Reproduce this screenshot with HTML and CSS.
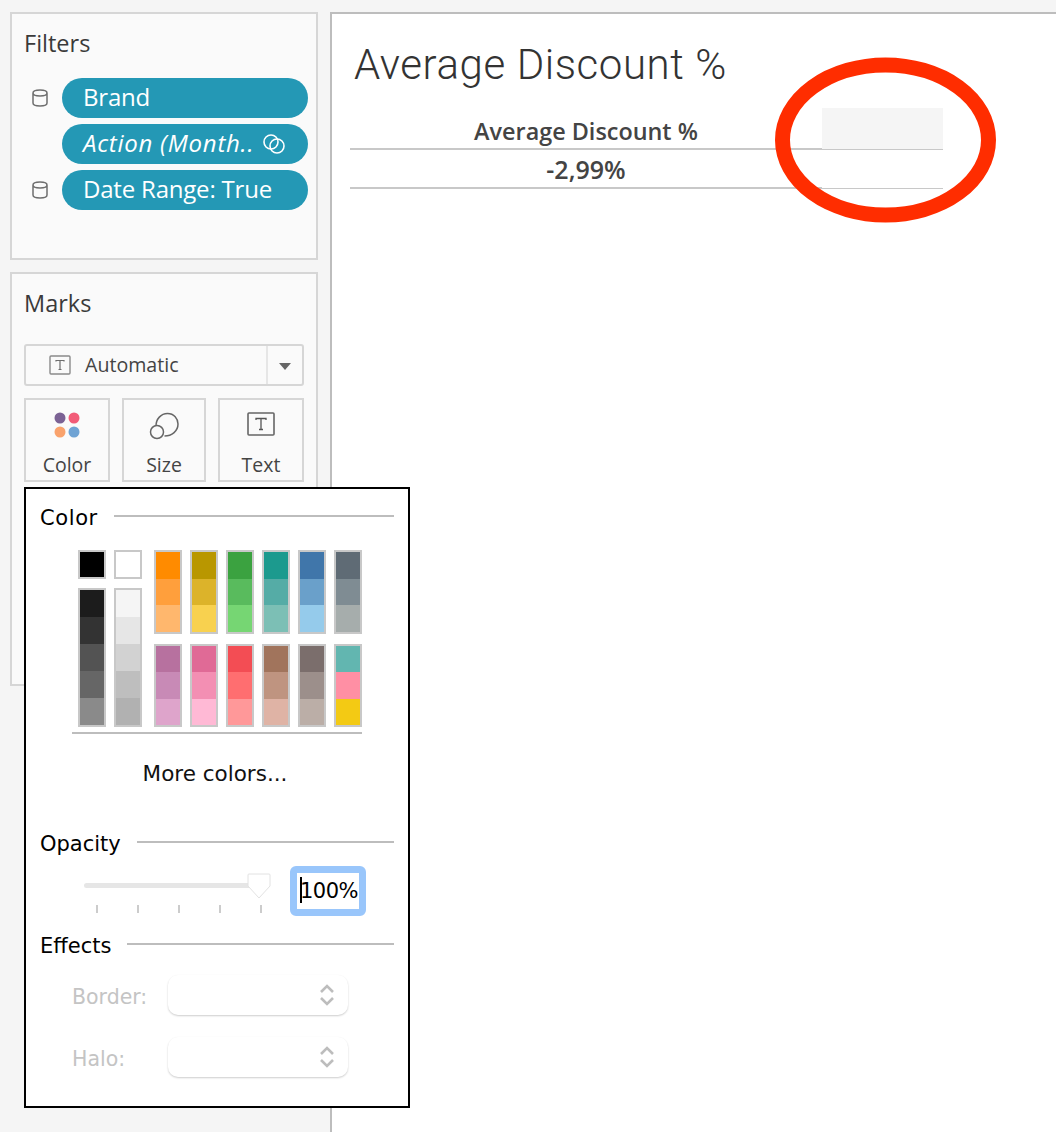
FILE: index.html
```html
<!DOCTYPE html>
<html lang="en">
<head>
<meta charset="utf-8">
<title>Average Discount %</title>
<link rel="stylesheet" href="styles.css">
</head>
<body>
<div class="app">
  <aside class="side">
    <section class="panel filters">
      <h2 class="panel-title">Filters</h2>
      <ul class="pills">
        <li class="pill-row">
          <svg class="cyl" viewBox="0 0 16 18" width="16" height="18"><path d="M1 4v10c0 2 3 3 7 3s7-1 7-3V4c0-2-3-3-7-3S1 2 1 4c0 2 3 3 7 3s7-1 7-3" fill="none" stroke="#6e6e6e" stroke-width="1.5"/></svg>
          <span class="pill">Brand</span>
        </li>
        <li class="pill-row">
          <span class="cyl-gap"></span>
          <span class="pill pill-action"><em>Action (Month..</em>
            <svg class="link" viewBox="0 0 24 22" width="24" height="22"><circle cx="9" cy="9" r="7" fill="none" stroke="#fff" stroke-width="1.6"/><circle cx="15" cy="13" r="7" fill="none" stroke="#fff" stroke-width="1.6"/></svg>
          </span>
        </li>
        <li class="pill-row">
          <svg class="cyl" viewBox="0 0 16 18" width="16" height="18"><path d="M1 4v10c0 2 3 3 7 3s7-1 7-3V4c0-2-3-3-7-3S1 2 1 4c0 2 3 3 7 3s7-1 7-3" fill="none" stroke="#6e6e6e" stroke-width="1.5"/></svg>
          <span class="pill">Date Range: True</span>
        </li>
      </ul>
    </section>

    <section class="panel marks">
      <h2 class="panel-title">Marks</h2>
      <div class="mark-select">
        <span class="mark-select-main">
          <svg viewBox="0 0 22 20" width="22" height="20"><rect x="1" y="1" width="20" height="18" rx="1" fill="none" stroke="#8a8a8a" stroke-width="1.4"/><path d="M7 6.500V5.500h8v1M11 5.500v9M9.500 14.500h3" fill="none" stroke="#6e6e6e" stroke-width="1.2"/></svg>
          <span class="mark-select-label">Automatic</span>
        </span>
        <span class="mark-select-arrow"></span>
      </div>
      <div class="mark-btns">
        <div class="mark-btn btn-color">
          <svg viewBox="0 0 26 26" width="26" height="26"><circle cx="6" cy="6" r="5.500" fill="#7b6294"/><circle cx="20" cy="6" r="5.500" fill="#f25c78"/><circle cx="6" cy="20" r="5.500" fill="#f9a26c"/><circle cx="20" cy="20" r="5.500" fill="#6fa3d4"/></svg>
          <span>Color</span>
        </div>
        <div class="mark-btn btn-size">
          <svg viewBox="0 0 30 28" width="30" height="28"><path d="M7 14C7 7 12 1.500 18.500 1.500S29 6.500 29 12c0 7-6 12-13.500 12" fill="none" stroke="#666" stroke-width="1.5"/><circle cx="8" cy="20" r="6.500" fill="none" stroke="#666" stroke-width="1.500"/></svg>
          <span>Size</span>
        </div>
        <div class="mark-btn btn-text">
          <svg viewBox="0 0 28 24" width="28" height="24"><rect x="1" y="1" width="26" height="22" rx="1" fill="none" stroke="#666" stroke-width="1.600"/><path d="M9 8V6.500h10V8M14 6.500v11M12 17.500h4" fill="none" stroke="#555" stroke-width="1.300"/></svg>
          <span>Text</span>
        </div>
      </div>
    </section>
  </aside>

  <main class="canvas">
    <h1 class="sheet-title">Average Discount %</h1>
    <div class="table">
      <div class="th">Average Discount %</div>
      <div class="th th-blank"></div>
      <div class="td">-2,99%</div>
      <div class="td td-blank"></div>
    </div>
  </main>
</div>

<svg class="annotation" viewBox="0 0 222 166" width="222" height="166"><ellipse cx="110.500" cy="83" rx="103" ry="75" fill="none" stroke="#ff2d00" stroke-width="15"/></svg>

<div class="popup">
  <div class="pop-head head-color"><span>Color</span><i></i></div>
  <div class="palette">
    <div class="mono">
      <div class="swatch chip"><b style="background:#000"></b></div>
      <div class="swatch chip"><b style="background:#fff"></b></div>
      <div class="swatch tall"><b style="background:#1c1c1c"></b><b style="background:#333"></b><b style="background:#535353"></b><b style="background:#666"></b><b style="background:#8a8a8a"></b></div>
      <div class="swatch tall"><b style="background:#f5f5f5"></b><b style="background:#e6e6e6"></b><b style="background:#d2d2d2"></b><b style="background:#bebebe"></b><b style="background:#b1b1b1"></b></div>
    </div>
    <div class="hues">
      <div class="swatch"><b style="background:#ff8b00"></b><b style="background:#ff9f3c"></b><b style="background:#ffb76d"></b></div>
      <div class="swatch"><b style="background:#b99700"></b><b style="background:#dcb32a"></b><b style="background:#f8d14f"></b></div>
      <div class="swatch"><b style="background:#3ba240"></b><b style="background:#59bb5d"></b><b style="background:#76d673"></b></div>
      <div class="swatch"><b style="background:#1c9a8e"></b><b style="background:#55aca6"></b><b style="background:#7cbfb5"></b></div>
      <div class="swatch"><b style="background:#4076aa"></b><b style="background:#6aa0ca"></b><b style="background:#95cbeb"></b></div>
      <div class="swatch"><b style="background:#5f6b75"></b><b style="background:#7f8c93"></b><b style="background:#a6adac"></b></div>
      <div class="swatch"><b style="background:#b7719f"></b><b style="background:#c88ab6"></b><b style="background:#dea4cb"></b></div>
      <div class="swatch"><b style="background:#e06a96"></b><b style="background:#f38fb3"></b><b style="background:#ffb9d5"></b></div>
      <div class="swatch"><b style="background:#f34d54"></b><b style="background:#ff6e70"></b><b style="background:#ff9899"></b></div>
      <div class="swatch"><b style="background:#a1745c"></b><b style="background:#bf9480"></b><b style="background:#dfb3a5"></b></div>
      <div class="swatch"><b style="background:#7b6e6c"></b><b style="background:#9c8f8b"></b><b style="background:#bbaea7"></b></div>
      <div class="swatch"><b style="background:#62b6b0"></b><b style="background:#ff8fa4"></b><b style="background:#f3ca14"></b></div>
    </div>
  </div>
  <div class="more">More colors...</div>

  <div class="pop-head head-opacity"><span>Opacity</span><i></i></div>
  <div class="opacity-row">
    <div class="slider">
      <div class="track"></div>
      <svg class="thumb" viewBox="0 0 24 26" width="24" height="26"><path d="M2 1h20a1 1 0 0 1 1 1v11L12 25 1 13V2a1 1 0 0 1 1-1z" fill="#fff" stroke="#e2e2e2"/></svg>
      <div class="ticks"><i></i><i></i><i></i><i></i><i></i></div>
    </div>
    <div class="pct"><span class="caret"></span>100%</div>
  </div>

  <div class="pop-head head-effects"><span>Effects</span><i></i></div>
  <div class="effect">
    <span class="effect-label">Border:</span>
    <div class="stepper"><svg viewBox="0 0 16 24" width="16" height="24"><path d="M2 9l6-6 6 6M2 15l6 6 6-6" fill="none" stroke="#bdbdbd" stroke-width="2.600"/></svg></div>
  </div>
  <div class="effect">
    <span class="effect-label">Halo:</span>
    <div class="stepper"><svg viewBox="0 0 16 24" width="16" height="24"><path d="M2 9l6-6 6 6M2 15l6 6 6-6" fill="none" stroke="#bdbdbd" stroke-width="2.600"/></svg></div>
  </div>
</div>
</body>
</html>
```

FILE: styles.css
```css
* { box-sizing: border-box; }
html, body { margin: 0; height: 100%; overflow: hidden; }
body { background: #f5f5f5; font-family: "Open Sans", "Noto Sans", sans-serif; color: #333; position: relative; }
.app { display: flex; height: 1132px; }

.side { width: 330px; flex: none; padding: 12px 12px 0 10px; display: flex; flex-direction: column; gap: 12px; }
.panel { background: #fafafa; border: 2px solid #d6d6d6; padding: 14px 8px 0 12px; }
.filters { height: 248px; }
.marks { height: 414px; }
.panel-title { margin: 0; font-size: 23.500px; font-weight: 400; line-height: 30px; color: #3a3a3a; }

.pills { list-style: none; margin: 20px 0 0; padding: 0; display: flex; flex-direction: column; gap: 6px; }
.pill-row { display: flex; align-items: center; gap: 14px; padding-left: 8px; }
.cyl { flex: none; }
.cyl-gap { width: 16px; flex: none; }
.pill { flex: 1; height: 40px; border-radius: 20px; background: #2498b5; color: #fff; font-size: 24px; line-height: 38px; padding-left: 21px; white-space: nowrap; letter-spacing: -.2px; }
.pill-action { display: flex; align-items: center; padding-bottom: 2px; }
.pill-action em { font-style: italic; letter-spacing: .75px; }
.link { margin: 2px 0 0 8px; }

.mark-select { margin-top: 26px; width: 280px; height: 42px; border: 2px solid #d6d6d6; border-radius: 3px; display: flex; }
.mark-select-main { flex: 1; display: flex; align-items: center; gap: 13px; padding-left: 23px; font-size: 19.600px; color: #444; border-right: 2px solid #e6e6e6; }
.mark-select-label { margin: -2px 0 0 1px; }
.mark-select-arrow { width: 34px; position: relative; }
.mark-select-arrow::after { content: ""; position: absolute; left: 11px; top: 17px; border: 6.500px solid transparent; border-top: 7px solid #666; border-bottom: 0; }
.mark-btns { display: flex; gap: 12px; margin-top: 12px; width: 280px; }
.mark-btn { height: 84px; border: 2px solid #d6d6d6; display: flex; flex-direction: column; align-items: center; font-size: 19.500px; color: #444; padding-top: 12px; }
.mark-btn span { margin-top: auto; line-height: 30px; }
.btn-color { width: 86px; }
.btn-size { width: 84px; }
.btn-text { width: 86px; }

.canvas { flex: 1; background: #fff; border-left: 2px solid #bdbdbd; border-top: 2px solid #bdbdbd; margin-top: 12px; padding: 25px 0 0 22px; }
.sheet-title { margin: 0; font-family: Roboto, "Open Sans", sans-serif; font-size: 42px; font-weight: 300; line-height: 52px; color: #333; letter-spacing: .58px; }
.table { display: grid; grid-template-columns: 472px 121px; margin-top: 17px; margin-left: -4px; }
.th, .td { text-align: center; font-weight: 600; color: #444; border-bottom: 2px solid #c8c8c8; }
.th { height: 42px; line-height: 46px; font-size: 23.400px; }
.td { height: 39px; line-height: 38px; font-size: 25px; }
.th-blank { background: #f5f5f5; border-bottom-width: 1px; }
.td-blank { border-bottom-width: 1px; }

.annotation { position: absolute; left: 775px; top: 57px; }

.popup { position: absolute; left: 24px; top: 487px; width: 386px; height: 621px; background: #fff; border: 2px solid #000; padding: 15px 14px 0 14px; font-family: "DejaVu Sans", sans-serif; color: #000; font-size: 20.500px; }
.pop-head { display: flex; align-items: center; gap: 16px; height: 28px; font-size: 21px; }
.head-color span { letter-spacing: .6px; }
.pop-head i { flex: 1; height: 2px; background: #bdbdbd; margin-top: -4px; }
.palette { display: flex; margin: 18px 0 0 32px; width: 290px; padding: 0 0 5px 6px; gap: 12px; border-bottom: 2px solid #bdbdbd; }
.mono { display: grid; grid-template-columns: 28px 28px; gap: 9px 8px; grid-template-rows: 29px 139px; }
.hues { display: grid; grid-template-columns: repeat(6, 28px); grid-template-rows: 84px 83px; column-gap: 8px; row-gap: 10px; }
.swatch { border: 2px solid #c8c8c8; display: flex; flex-direction: column; }
.swatch b { flex: 1; display: block; }
.more { text-align: center; margin-top: 26px; padding-right: 4px; font-size: 21.500px; line-height: 28px; color: #111; }

.head-opacity { margin-top: 42px; }
.opacity-row { display: flex; margin-top: 8px; padding-left: 44px; height: 50px; }
.slider { position: relative; width: 206px; }
.track { position: absolute; left: 0; top: 17px; width: 176px; height: 5px; border-radius: 3px; background: #e6e6e6; }
.thumb { position: absolute; left: 163px; top: 7px; }
.ticks { position: absolute; left: 12px; top: 39px; width: 166px; display: flex; justify-content: space-between; }
.ticks i { width: 2px; height: 8px; background: #ccc; }
.pct { width: 76px; height: 50px; border: 7px solid #99c6fb; border-radius: 6px; background: #fff; font-size: 21px; line-height: 36px; text-align: right; padding-right: 1px; position: relative; white-space: nowrap; letter-spacing: -.5px; }
.caret { position: absolute; left: 3px; top: 4px; width: 2px; height: 26px; background: #000; }

.head-effects { margin-top: 16px; }
.effect { display: flex; align-items: center; height: 40px; }
.head-effects + .effect { margin-top: 15px; }
.effect + .effect { margin-top: 22px; }
.effect-label { width: 128px; padding: 4px 0 0 32px; color: #c4c4c4; white-space: nowrap; }
.stepper { width: 180px; height: 40px; border-radius: 10px; background: #fff; box-shadow: 0 1px 2px rgba(0,0,0,.2); display: flex; align-items: center; justify-content: flex-end; padding-right: 13px; }
```
